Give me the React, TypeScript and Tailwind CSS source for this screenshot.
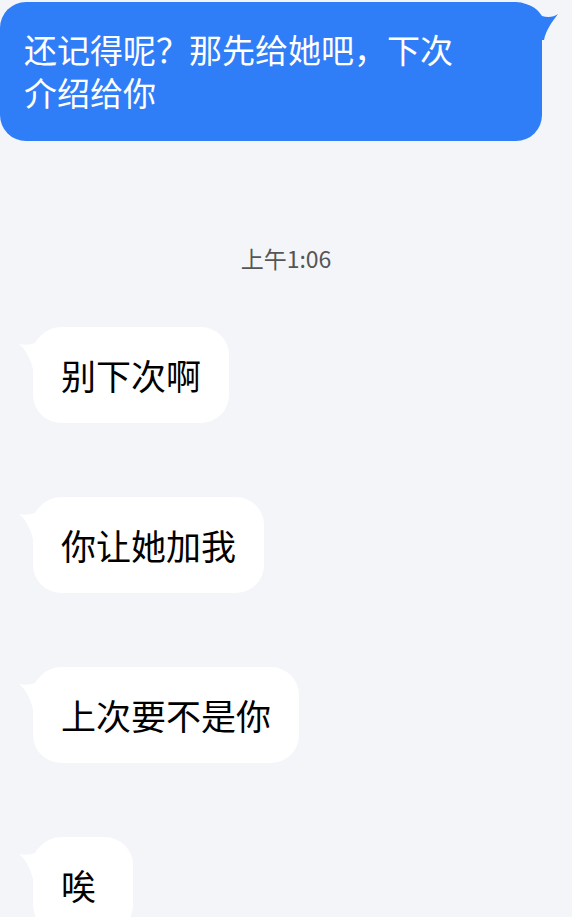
const font = { fontFamily: '"Noto Sans CJK SC", "Noto Sans", sans-serif' };

const incoming = ["别下次啊", "你让她加我", "上次要不是你", "唉"];

function OutgoingBubble({ text }: { text: string }) {
  return (
    <div className="relative w-[542px] mt-[2px] rounded-[26px] bg-[#2f7df7] pl-6 pt-[26px] pb-[27px]">
      <p className="w-[440px] text-[33px] leading-[43px] text-white">{text}</p>
      {/* tail */}
      <svg
        className="absolute right-[-16px] top-0"
        width="36"
        height="40"
        viewBox="0 0 36 40"
      >
        <path
          d="M0 2 C10 2 16 8 20 14 C26 16 32 15 36 12 C30 20 24 28 22 38 L0 38 Z"
          fill="#2f7df7"
        />
      </svg>
    </div>
  );
}

function IncomingBubble({ text }: { text: string }) {
  return (
    <div className="relative self-start ml-[33px] min-w-[100px] rounded-[28px] bg-white px-7 py-[26px]">
      <p className="text-[35px] leading-[44px] text-black whitespace-nowrap">{text}</p>
      {/* tail */}
      <svg
        className="absolute left-[-14px] top-[6px]"
        width="30"
        height="36"
        viewBox="0 0 30 36"
      >
        <path
          d="M30 0 C22 2 18 6 16 10 C10 12 5 12 0 11 C6 16 11 24 14 36 L30 36 Z"
          fill="#ffffff"
        />
      </svg>
    </div>
  );
}

export default function App() {
  return (
    <div className="h-[917px] w-[572px] overflow-hidden bg-[#f3f5f9]" style={font}>
      <div className="flex flex-col">
        <OutgoingBubble text="还记得呢？那先给她吧，下次介绍给你" />

        <div className="mt-[101px] mb-[53px] text-center text-[23px] leading-[32px] text-[#555555]">
          上午1:06
        </div>

        <div className="flex flex-col gap-[74px]">
          {incoming.map((m) => (
            <IncomingBubble key={m} text={m} />
          ))}
        </div>
      </div>
    </div>
  );
}
